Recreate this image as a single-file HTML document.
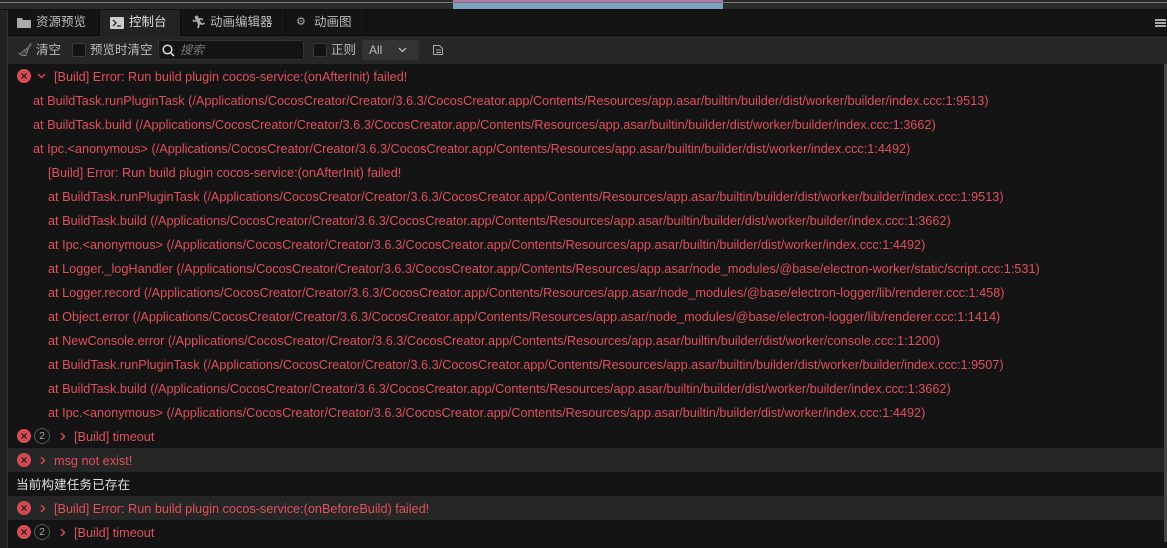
<!DOCTYPE html>
<html><head><meta charset="utf-8"><style>
*{margin:0;padding:0;box-sizing:border-box}
body{width:1167px;height:548px;overflow:hidden;background:#141414;font-family:"Liberation Sans","Noto Sans CJK SC",sans-serif;font-size:12px;position:relative}
.ruler{position:absolute;left:0;top:0;width:1167px;height:10px;background:#2c2c2c;border-bottom:1px solid #111}
.ruler .line{position:absolute;top:2px;left:0;right:0;height:1px;background:#777}
.ruler .blue{position:absolute;left:453px;top:0;width:270px;height:9px;background:#7ba3c0}
.ruler .pink{position:absolute;left:453px;top:0;width:270px;height:2px;background:#b478a8}
.leftstrip{position:absolute;left:0;top:10px;width:8px;height:538px;background:#222;border-right:1px solid #333}
.tabs{position:absolute;left:8px;top:10px;width:1159px;height:26px;background:#141414;border-bottom:1px solid #0a0a0a}
.tab{position:absolute;top:0;height:26px;color:#bbb;font-size:12.5px;line-height:25px;border-right:1px solid #0a0a0a}
.tab.act{background:#232323;color:#ddd}
.toolbar{position:absolute;left:8px;top:36px;width:1159px;height:28px;background:#262626}
.tb{position:absolute;top:0;line-height:28px;color:#bbb;font-size:12.5px}
.cb{position:absolute;top:7px;width:14px;height:14px;background:#141414;border:1px solid #3a3a3a;border-radius:2px}
.search{position:absolute;left:150px;top:4px;width:146px;height:20px;background:#141414;border:1px solid #333;border-radius:3px}
.sel{position:absolute;left:354px;top:4px;width:57px;height:20px;background:#333;border-radius:3px;color:#bbb;line-height:20px;padding-left:7px}
.row{position:absolute;left:8px;width:1156px;height:24px;line-height:26px;color:#e0505e;font-size:12.7px;white-space:nowrap}
.g{background:#262626}
.ic{position:absolute;left:9px;top:5px;width:14px;height:14px;border-radius:50%;background:#d94a57;color:#262626;font-size:12px;line-height:14px;text-align:center;font-weight:bold}
.cnt{position:absolute;left:26px;top:4px;width:16px;height:16px;border-radius:50%;border:1px solid #555;color:#aaa;font-size:10.5px;line-height:14px;text-align:center}
.scroll{position:absolute;left:1164px;top:64px;width:3px;height:478px;background:#444}
</style></head><body>
<div class="ruler"><div class="blue"></div><div class="pink"></div><div class="line"></div></div>
<div class="leftstrip"></div>
<div class="tabs">
<div class="tab" style="left:0;width:92px"><svg style="position:absolute;left:9px;top:7px" width="14" height="11"><path d="M0 1h5l1 2h8v8H0z" fill="#aaa"/></svg><span style="position:absolute;left:28px">资源预览</span></div>
<div class="tab act" style="left:92px;width:81px"><svg style="position:absolute;left:10px;top:7px" width="14" height="12"><rect width="14" height="12" rx="1" fill="#ccc"/><path d="M3 3l3 3-3 3M7 9h4" stroke="#232323" stroke-width="1.3" fill="none"/></svg><span style="position:absolute;left:29px">控制台</span></div>
<div class="tab" style="left:173px;width:105px"><span style="position:absolute;left:10px;color:#aaa">&#x1F3C3;&#xFE0E;</span><span style="position:absolute;left:29px">动画编辑器</span></div>
<div class="tab" style="left:278px;width:81px"><span style="position:absolute;left:10px;color:#aaa;font-size:11px">⚙</span><span style="position:absolute;left:28px">动画图</span></div>
<div style="position:absolute;right:1px;top:9px;width:11px;height:8px;border-top:2px solid #aaa;border-bottom:2px solid #aaa"><div style="margin-top:1px;height:2px;background:#aaa"></div></div>
</div>
<div class="toolbar">
<span class="tb" style="left:9px;color:#aaa">🧹&#xFE0E;</span><span class="tb" style="left:28px">清空</span>
<div class="cb" style="left:64px"></div><span class="tb" style="left:82px">预览时清空</span>
<div class="search"><svg style="position:absolute;left:3px;top:3px" width="13" height="13"><circle cx="5.5" cy="5.5" r="4.3" stroke="#ddd" stroke-width="1.5" fill="none"/><path d="M8.7 8.7l3.3 3.3" stroke="#ddd" stroke-width="1.5"/></svg><span style="position:absolute;left:21px;top:0;line-height:18px;color:#777;font-style:italic">搜索</span></div>
<div class="cb" style="left:305px"></div><span class="tb" style="left:323px">正则</span>
<div class="sel">All<svg style="position:absolute;left:36px;top:7px" width="9" height="6"><path d="M1 1l3.5 3.5L8 1" stroke="#bbb" stroke-width="1.3" fill="none"/></svg></div>
<svg style="position:absolute;left:424px;top:8px" width="12" height="12"><path d="M1.5 1.5h6l3 3v6h-9z M4 6h5M4 8.5h5" stroke="#aaa" fill="none"/></svg>
</div>

<div class="row" style="top:64px"><div class="ic">×</div><svg style="position:absolute;left:29px;top:9px" width="9" height="6"><path d="M1 1l3.5 3.5L8 1" stroke="#d94a57" stroke-width="1.4" fill="none"/></svg><span style="position:absolute;left:46px">[Build] Error: Run build plugin cocos-service:(onAfterInit) failed!</span></div>
<div class="row" style="top:88px"><span style="position:absolute;left:25px">at BuildTask.runPluginTask (/Applications/CocosCreator/Creator/3.6.3/CocosCreator.app/Contents/Resources/app.asar/builtin/builder/dist/worker/builder/index.ccc:1:9513)</span></div>
<div class="row" style="top:112px"><span style="position:absolute;left:25px">at BuildTask.build (/Applications/CocosCreator/Creator/3.6.3/CocosCreator.app/Contents/Resources/app.asar/builtin/builder/dist/worker/builder/index.ccc:1:3662)</span></div>
<div class="row" style="top:136px"><span style="position:absolute;left:25px">at Ipc.&lt;anonymous&gt; (/Applications/CocosCreator/Creator/3.6.3/CocosCreator.app/Contents/Resources/app.asar/builtin/builder/dist/worker/index.ccc:1:4492)</span></div>
<div class="row" style="top:160px"><span style="position:absolute;left:40px">[Build] Error: Run build plugin cocos-service:(onAfterInit) failed!</span></div>
<div class="row" style="top:184px"><span style="position:absolute;left:40px">at BuildTask.runPluginTask (/Applications/CocosCreator/Creator/3.6.3/CocosCreator.app/Contents/Resources/app.asar/builtin/builder/dist/worker/builder/index.ccc:1:9513)</span></div>
<div class="row" style="top:208px"><span style="position:absolute;left:40px">at BuildTask.build (/Applications/CocosCreator/Creator/3.6.3/CocosCreator.app/Contents/Resources/app.asar/builtin/builder/dist/worker/builder/index.ccc:1:3662)</span></div>
<div class="row" style="top:232px"><span style="position:absolute;left:40px">at Ipc.&lt;anonymous&gt; (/Applications/CocosCreator/Creator/3.6.3/CocosCreator.app/Contents/Resources/app.asar/builtin/builder/dist/worker/index.ccc:1:4492)</span></div>
<div class="row" style="top:256px"><span style="position:absolute;left:40px">at Logger._logHandler (/Applications/CocosCreator/Creator/3.6.3/CocosCreator.app/Contents/Resources/app.asar/node_modules/@base/electron-worker/static/script.ccc:1:531)</span></div>
<div class="row" style="top:280px"><span style="position:absolute;left:40px">at Logger.record (/Applications/CocosCreator/Creator/3.6.3/CocosCreator.app/Contents/Resources/app.asar/node_modules/@base/electron-logger/lib/renderer.ccc:1:458)</span></div>
<div class="row" style="top:304px"><span style="position:absolute;left:40px">at Object.error (/Applications/CocosCreator/Creator/3.6.3/CocosCreator.app/Contents/Resources/app.asar/node_modules/@base/electron-logger/lib/renderer.ccc:1:1414)</span></div>
<div class="row" style="top:328px"><span style="position:absolute;left:40px">at NewConsole.error (/Applications/CocosCreator/Creator/3.6.3/CocosCreator.app/Contents/Resources/app.asar/builtin/builder/dist/worker/console.ccc:1:1200)</span></div>
<div class="row" style="top:352px"><span style="position:absolute;left:40px">at BuildTask.runPluginTask (/Applications/CocosCreator/Creator/3.6.3/CocosCreator.app/Contents/Resources/app.asar/builtin/builder/dist/worker/builder/index.ccc:1:9507)</span></div>
<div class="row" style="top:376px"><span style="position:absolute;left:40px">at BuildTask.build (/Applications/CocosCreator/Creator/3.6.3/CocosCreator.app/Contents/Resources/app.asar/builtin/builder/dist/worker/builder/index.ccc:1:3662)</span></div>
<div class="row" style="top:400px"><span style="position:absolute;left:40px">at Ipc.&lt;anonymous&gt; (/Applications/CocosCreator/Creator/3.6.3/CocosCreator.app/Contents/Resources/app.asar/builtin/builder/dist/worker/index.ccc:1:4492)</span></div>
<div class="row" style="top:424px"><div class="ic">×</div><div class="cnt">2</div><svg style="position:absolute;left:52px;top:8px" width="6" height="9"><path d="M1 1l3.5 3.5L1 8" stroke="#d94a57" stroke-width="1.4" fill="none"/></svg><span style="position:absolute;left:66px">[Build] timeout</span></div>
<div class="row g" style="top:448px"><div class="ic">×</div><svg style="position:absolute;left:32px;top:8px" width="6" height="9"><path d="M1 1l3.5 3.5L1 8" stroke="#d94a57" stroke-width="1.4" fill="none"/></svg><span style="position:absolute;left:46px">msg not exist!</span></div>
<div class="row" style="top:472px;color:#ddd"><span style="position:absolute;left:8px">当前构建任务已存在</span></div>
<div class="row g" style="top:496px"><div class="ic">×</div><svg style="position:absolute;left:32px;top:8px" width="6" height="9"><path d="M1 1l3.5 3.5L1 8" stroke="#d94a57" stroke-width="1.4" fill="none"/></svg><span style="position:absolute;left:46px">[Build] Error: Run build plugin cocos-service:(onBeforeBuild) failed!</span></div>
<div class="row" style="top:520px"><div class="ic">×</div><div class="cnt">2</div><svg style="position:absolute;left:52px;top:8px" width="6" height="9"><path d="M1 1l3.5 3.5L1 8" stroke="#d94a57" stroke-width="1.4" fill="none"/></svg><span style="position:absolute;left:66px">[Build] timeout</span></div>
<div class="scroll"></div>
</body></html>
